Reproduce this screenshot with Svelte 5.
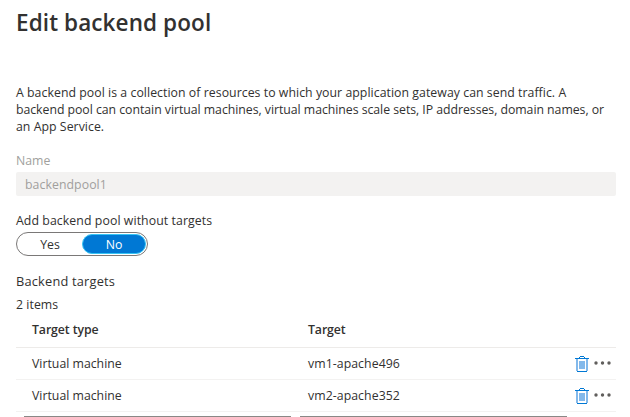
<script>
  const intro = [
    { text: 'A backend pool is a collection of resources to which your application gateway can send traffic. A', spacing: 0.042 },
    { text: 'backend pool can contain virtual machines, virtual machines scale sets, IP addresses, domain names, or', spacing: -0.042 },
    { text: 'an App Service.', spacing: 0.04 }
  ];
  const rows = [
    { type: 'Virtual machine', target: 'vm1-apache496' },
    { type: 'Virtual machine', target: 'vm2-apache352' }
  ];
</script>

<main>
  <h1>Edit backend pool</h1>
  <div class="intro">
    {#each intro as line}<p style:letter-spacing="{line.spacing}px">{line.text}</p>{/each}
  </div>
  <div class="name-label">Name</div>
  <div class="field">backendpool1</div>
  <div class="toggle-label">Add backend pool without targets</div>
  <div class="toggle">
    <span class="yes">Yes</span>
    <span class="no">No</span>
  </div>
  <div class="targets">Backend targets</div>
  <div class="count">2 items</div>
  <div class="row head">
    <span class="type">Target type</span>
    <span class="target">Target</span>
  </div>
  {#each rows as row}
    <div class="row">
      <span class="type">{row.type}</span>
      <span class="target">{row.target}</span>
      <svg class="trash" width="14" height="16" viewBox="0 0 14 16" shape-rendering="crispEdges">
        <path d="M1 3h2v12h-2zM11 3h2v12h-2z" fill="#83b9eb" />
        <path d="M4 5h6v8H4z" fill="#83b9eb" />
        <path d="M0 2h14v1H0zM5 0h4v1H5zM4 1h1v1H4zM9 1h1v1H9zM2 15h10v1H2z" fill="#0078d4" />
      </svg>
      <svg class="more" width="17" height="5" viewBox="0 0 17 5">
        <circle cx="2" cy="2" r="1.7" /><circle cx="8.5" cy="2" r="1.7" /><circle cx="15" cy="2" r="1.7" />
      </svg>
    </div>
  {/each}
  <div class="inputs"><span></span><span></span></div>
</main>

<style>
  :global(body) { margin: 0; background: #fff; overflow: hidden; }
  main {
    box-sizing: border-box;
    width: 630px;
    height: 417px;
    overflow: hidden;
    padding: 7px 14px 0 16px;
    font-family: "Open Sans", "Noto Sans", sans-serif;
    font-size: 12.3px;
    line-height: 17px;
    color: #323130;
    white-space: nowrap;
  }
  h1 { margin: 0; height: 77px; font-size: 22.5px; line-height: 32px; font-weight: 600; letter-spacing: 0.1px; }
  p { margin: 0; height: 17px; }
  .name-label { margin-top: 17px; height: 20px; color: #a19f9d; }
  .field { box-sizing: border-box; width: 600px; height: 24px; padding: 1px 0 0 9px; line-height: 24px; letter-spacing: 0.06px; background: #f3f2f1; color: #a19f9d; border-radius: 2px; }
  .toggle-label { margin-top: 16px; height: 20px; letter-spacing: 0.08px; }
  .toggle { box-sizing: border-box; display: flex; width: 132px; height: 24px; padding: 1px; border: 1px solid #7a7877; border-radius: 12px; text-align: center; }
  .yes { width: 64px; line-height: 21px; }
  .no { box-sizing: border-box; width: 64px; height: 20px; border: 1px solid #35c5f5; border-radius: 10px; background: #0078d4; color: #fff; line-height: 19px; }
  .targets { margin-top: 17px; height: 23px; font-size: 12.8px; letter-spacing: 0.2px; }
  .count { height: 19px; letter-spacing: 0.05px; }
  .row { box-sizing: border-box; display: flex; align-items: center; width: 600px; height: 32px; padding-left: 16px; border-bottom: 1px solid #f3f2f1; }
  .row.head { height: 33px; padding-bottom: 3px; border-color: #edebe9; font-weight: 600; }
  .row.head span { letter-spacing: -0.1px; }
  .type { width: 276px; }
  .target { width: 267px; letter-spacing: 0.06px; }
  .trash { flex: none; margin-top: 1px; }
  .more { flex: none; margin-left: 5px; fill: #605e5c; }
  .inputs { display: flex; gap: 9px; margin: 4px 0 0 8px; }
  .inputs span { width: 267px; height: 1px; background: #8a8886; }
</style>
